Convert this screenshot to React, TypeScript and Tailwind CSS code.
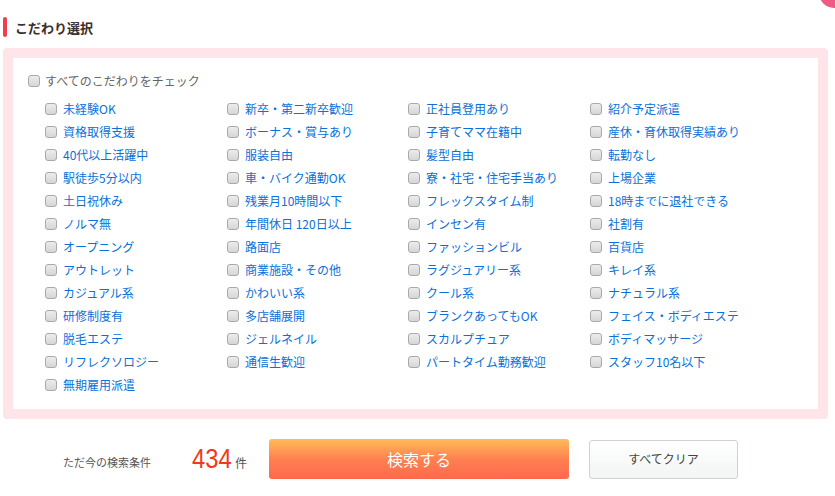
import React from 'react';

const ITEMS = [
    '未経験OK', '新卒・第二新卒歓迎', '正社員登用あり', '紹介予定派遣',
    '資格取得支援', 'ボーナス・賞与あり', '子育てママ在籍中', '産休・育休取得実績あり',
    '40代以上活躍中', '服装自由', '髪型自由', '転勤なし',
    '駅徒歩5分以内', '車・バイク通勤OK', '寮・社宅・住宅手当あり', '上場企業',
    '土日祝休み', '残業月10時間以下', 'フレックスタイム制', '18時までに退社できる',
    'ノルマ無', '年間休日 120日以上', 'インセン有', '社割有',
    'オープニング', '路面店', 'ファッションビル', '百貨店',
    'アウトレット', '商業施設・その他', 'ラグジュアリー系', 'キレイ系',
    'カジュアル系', 'かわいい系', 'クール系', 'ナチュラル系',
    '研修制度有', '多店舗展開', 'ブランクあってもOK', 'フェイス・ボディエステ',
    '脱毛エステ', 'ジェルネイル', 'スカルプチュア', 'ボディマッサージ',
    'リフレクソロジー', '通信生歓迎', 'パートタイム勤務歓迎', 'スタッフ10名以下',
    '無期雇用派遣',
];

function Box() {
    return (
        <span className="block w-[12px] h-[12px] shrink-0 rounded-[3px] border border-[#a9a9a9] bg-gradient-to-b from-[#ececec] to-[#d6d6d6]" />
    );
}

export default function App() {
    return (
        <div className="relative w-[835px] h-[496px] overflow-hidden bg-white font-['Noto_Sans_CJK_JP',sans-serif]">
            <div className="absolute -top-[22px] -right-[14px] w-[30px] h-[30px] rounded-full bg-[#ef5a86]" />

            <div className="pt-[17px] flex items-center">
                <span className="ml-[3px] w-[4px] h-[20px] rounded-[2px] bg-[#f23d4a]" />
                <h2 className="ml-[8px] text-[13px] font-bold leading-none text-[#3a2e2e]">こだわり選択</h2>
            </div>

            <div className="mt-[11px] ml-[3px] w-[825px] rounded-[4px] bg-[#ffe4ea] p-[10px]">
                <div className="bg-white pt-[11px] pb-[13px] pl-[15px]">
                    <label className="flex items-center h-[23px] gap-[5px] text-[12px] text-[#666]">
                        <Box />
                        <span>すべてのこだわりをチェック</span>
                    </label>
                    <div className="mt-[5px] ml-[17px] grid grid-cols-[182px_181px_182px_181px]">
                        {ITEMS.map((label) => (
                            <label key={label} className="flex items-center h-[23px] gap-[6px] text-[12px] text-[#0a70da] whitespace-nowrap">
                                <Box />
                                <span>{label}</span>
                            </label>
                        ))}
                    </div>
                </div>
            </div>

            <div className="mt-[20px] flex items-center h-[40px]">
                <span className="ml-[63px] w-[120px] pt-[6px] text-[11px] text-[#555]">ただ今の検索条件</span>
                <span className="ml-[9px] w-[42px] text-[27px] leading-none text-[#ee3a22] font-['Liberation_Sans',sans-serif] inline-block scale-x-[0.88] origin-left">434</span>
                <span className="ml-[1px] pt-[8px] text-[12px] text-[#555]">件</span>
                <button className="ml-[22px] w-[300px] h-[40px] rounded-[3px] bg-gradient-to-b from-[#ffbb59] via-[#ff8050] to-[#ff684e] text-white text-[16px]">
                    検索する
                </button>
                <button className="ml-[20px] w-[149px] h-[39px] rounded-[3px] border border-[#cfd2d1] bg-gradient-to-b from-white to-[#f2f5f4] text-[12px] text-[#444]">
                    すべてクリア
                </button>
            </div>
        </div>
    );
}
